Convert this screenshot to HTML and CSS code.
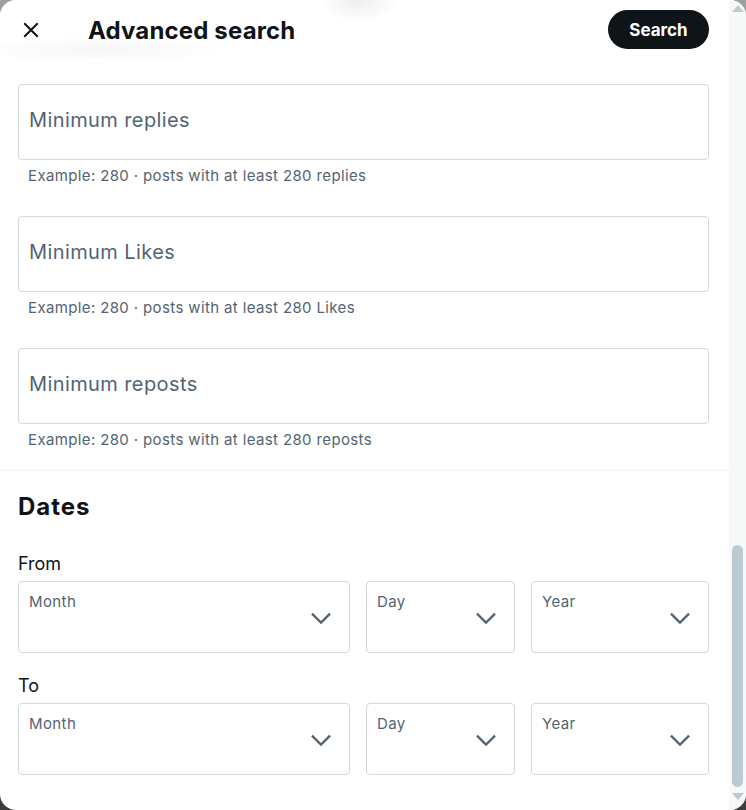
FILE: index.html
```html
<!DOCTYPE html>
<html lang="en">
<head>
<meta charset="utf-8">
<title>Advanced search</title>
<link rel="stylesheet" href="styles.css">
</head>
<body>
<div class="modal">
  <div class="main">
    <header class="header">
      <button class="close" aria-label="Close">
        <svg viewBox="0 0 24 24" width="24" height="24"><path d="M10.59 12L4.54 5.96l1.42-1.42L12 10.59l6.04-6.05 1.42 1.42L13.41 12l6.05 6.04-1.42 1.42L12 13.41l-6.04 6.05-1.42-1.42L10.59 12z"/></svg>
      </button>
      <h1 class="title">Advanced search</h1>
      <button class="search-btn">Search</button>
    </header>

    <section class="fields">
      <div class="field">
        <div class="input"><span class="placeholder">Minimum replies</span></div>
        <p class="helper">Example: 280 · posts with at least 280 replies</p>
      </div>
      <div class="field">
        <div class="input"><span class="placeholder">Minimum Likes</span></div>
        <p class="helper">Example: 280 · posts with at least 280 Likes</p>
      </div>
      <div class="field">
        <div class="input"><span class="placeholder">Minimum reposts</span></div>
        <p class="helper">Example: 280 · posts with at least 280 reposts</p>
      </div>
    </section>

    <section class="dates">
      <h2 class="dates-title">Dates</h2>

      <div class="range-label">From</div>
      <div class="select-row">
        <div class="select month"><span class="select-label">Month</span><svg class="chev" viewBox="0 0 24 24"><path d="M3.543 8.96l1.414-1.42L12 14.59l7.043-7.05 1.414 1.42L12 17.41 3.543 8.96z"/></svg></div>
        <div class="select day"><span class="select-label">Day</span><svg class="chev" viewBox="0 0 24 24"><path d="M3.543 8.96l1.414-1.42L12 14.59l7.043-7.05 1.414 1.42L12 17.41 3.543 8.96z"/></svg></div>
        <div class="select year"><span class="select-label">Year</span><svg class="chev" viewBox="0 0 24 24"><path d="M3.543 8.96l1.414-1.42L12 14.59l7.043-7.05 1.414 1.42L12 17.41 3.543 8.96z"/></svg></div>
      </div>

      <div class="range-label to">To</div>
      <div class="select-row">
        <div class="select month"><span class="select-label">Month</span><svg class="chev" viewBox="0 0 24 24"><path d="M3.543 8.96l1.414-1.42L12 14.59l7.043-7.05 1.414 1.42L12 17.41 3.543 8.96z"/></svg></div>
        <div class="select day"><span class="select-label">Day</span><svg class="chev" viewBox="0 0 24 24"><path d="M3.543 8.96l1.414-1.42L12 14.59l7.043-7.05 1.414 1.42L12 17.41 3.543 8.96z"/></svg></div>
        <div class="select year"><span class="select-label">Year</span><svg class="chev" viewBox="0 0 24 24"><path d="M3.543 8.96l1.414-1.42L12 14.59l7.043-7.05 1.414 1.42L12 17.41 3.543 8.96z"/></svg></div>
      </div>
    </section>
  </div>

  <div class="scrollbar">
    <div class="arrow up"></div>
    <div class="track">
      <div class="thumb"></div>
    </div>
    <div class="arrow down"></div>
  </div>
</div>
</body>
</html>
```

FILE: styles.css
```css
* { box-sizing: border-box; }

html, body {
  margin: 0;
  padding: 0;
  width: 746px;
  height: 810px;
  overflow: hidden;
}

body {
  background: linear-gradient(to bottom, #a0a0a0 0%, #6a6a6a 50%, #3c3c3c 100%);
  font-family: "Inter", "Noto Sans", "Liberation Sans", sans-serif;
  color: #0f1419;
}

.modal {
  width: 746px;
  height: 810px;
  border-radius: 16px;
  overflow: hidden;
  background: #ffffff;
  display: flex;
}

.main {
  flex: 1;
  display: flex;
  flex-direction: column;
  min-width: 0;
}

/* Header */
.header {
  height: 59px;
  display: flex;
  align-items: center;
  padding: 0 20px 0 13px;
  background:
    radial-gradient(ellipse 40px 22px at 358px 0px, rgba(0,0,0,0.07), rgba(0,0,0,0) 100%),
    radial-gradient(ellipse 130px 14px at 100px 50px, rgba(0,0,0,0.035), rgba(0,0,0,0) 100%),
    #ffffff;
}

.close {
  width: 35px;
  height: 35px;
  border: 0;
  padding: 0;
  margin: 0;
  background: transparent;
  display: flex;
  align-items: center;
  justify-content: center;
  border-radius: 50%;
}

.close svg {
  fill: #0f1419;
  display: block;
}

.title {
  margin: 0 0 0 40px;
  font-size: 24px;
  font-weight: 700;
  line-height: 28px;
  letter-spacing: 0.15px;
  flex: 1;
  padding-top: 2px;
}

.search-btn {
  height: 39px;
  width: 101px;
  border: 0;
  border-radius: 20px;
  background: #0f1419;
  color: #ffffff;
  font-family: inherit;
  font-size: 17px;
  font-weight: 700;
  padding: 0;
  margin-top: 0;
}

/* Number fields */
.fields {
  padding: 25px 20px 0 18px;
}

.field + .field {
  margin-top: 30px;
}

.input {
  height: 76px;
  border: 1px solid #cfd9de;
  border-radius: 4px;
  display: flex;
  align-items: center;
  padding: 0 10px 4px 10px;
}

.placeholder {
  font-size: 20px;
  line-height: 24px;
  letter-spacing: 0.4px;
  color: #536471;
}

.helper {
  margin: 6px 0 0 0;
  padding-left: 10px;
  font-size: 15px;
  line-height: 20px;
  letter-spacing: 0.37px;
  color: #536471;
}

/* Dates */
.dates {
  margin-top: 20px;
  border-top: 1px solid #eff3f4;
  padding: 22px 20px 0 18px;
}

.dates-title {
  margin: 0;
  font-size: 24px;
  line-height: 28px;
  font-weight: 700;
  letter-spacing: 1px;
}

.range-label {
  margin-top: 31px;
  font-size: 18px;
  line-height: 24px;
  color: #0f1419;
}

.range-label.to {
  margin-top: 21px;
}

.select-row {
  margin-top: 5px;
  display: flex;
  gap: 16px;
}

.select {
  height: 72px;
  border: 1px solid #cfd9de;
  border-radius: 4px;
  display: flex;
  justify-content: space-between;
  align-items: flex-start;
  padding: 10px 14px 0 10px;
}

.select.month { width: 332px; }
.select.day { width: 149px; }
.select.year { width: 178px; }

.select-label {
  font-size: 15px;
  line-height: 20px;
  letter-spacing: 0.4px;
  color: #536471;
}

.chev {
  width: 28px;
  height: 28px;
  fill: #536471;
  margin-top: 12px;
  flex: none;
}

/* Fake scrollbar */
.scrollbar {
  width: 17px;
  background: #f7f9f9;
  display: flex;
  flex-direction: column;
  align-items: center;
}

.arrow {
  width: 0;
  height: 0;
  border-left: 6px solid transparent;
  border-right: 6px solid transparent;
  flex: none;
}

.arrow.up {
  margin-top: 5px;
  border-bottom: 7px solid #b9cad3;
}

.arrow.down {
  margin-bottom: 10px;
  border-top: 7px solid #b9cad3;
}

.track {
  flex: 1;
  width: 100%;
  display: flex;
  flex-direction: column;
  align-items: center;
  padding-top: 533px;
  padding-bottom: 6px;
}

.thumb {
  width: 11px;
  flex: 1;
  background: #b9cad3;
  border-radius: 6px;
}
```
